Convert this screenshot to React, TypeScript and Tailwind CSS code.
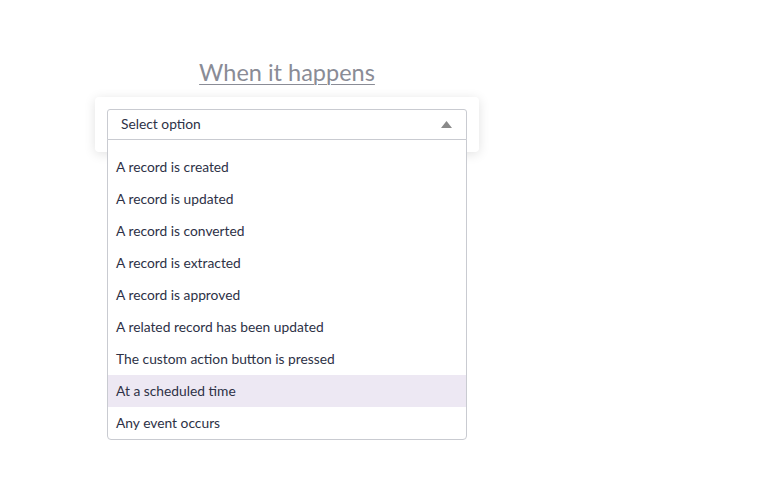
import React from "react";

const items = [
  "A record is created",
  "A record is updated",
  "A record is converted",
  "A record is extracted",
  "A record is approved",
  "A related record has been updated",
  "The custom action button is pressed",
  "At a scheduled time",
  "Any event occurs",
];

export default function App() {
  return (
    <div className="min-h-[481px] w-[764px] bg-white" style={{ fontFamily: "Lato, 'Open Sans', sans-serif" }}>
      <div className="ml-[95px] w-[384px] pt-[56px]">
        <h1 className="text-center text-[23.5px] leading-[32px] text-[#8a8c96] underline decoration-1 underline-offset-[3px]">
          When it happens
        </h1>
        <div className="mt-[9px] rounded-[4px] bg-white px-[12px] pt-[12px] pb-[12px] shadow-[0_2px_12px_rgba(0,0,0,0.12)]">
          <div className="relative">
            <div className="flex h-[31px] items-center justify-between rounded-t-[3px] border border-[#c9cbd1] pl-[13px] pr-[14px] text-[13.8px] text-[#2d3146]">
              <span className="mb-[1px]">Select option</span>
              <svg width="11" height="7" viewBox="0 0 11 7"><path d="M0 7 L5.5 0 L11 7 Z" fill="#8a8a8a" /></svg>
            </div>
            <div className="absolute left-0 right-0 top-[30px] z-10 rounded-b-[4px] border border-[#c9cbd1] bg-white pt-[11px] text-[13.8px] text-[#2d3146]">
              {items.map((t) => (
                <div
                  key={t}
                  className={
                    "flex h-[32px] items-center pl-[8px] " +
                    (t === "At a scheduled time" ? "bg-[#ede8f3]" : "")
                  }
                >
                  {t}
                </div>
              ))}
            </div>
          </div>
        </div>
      </div>
    </div>
  );
}
